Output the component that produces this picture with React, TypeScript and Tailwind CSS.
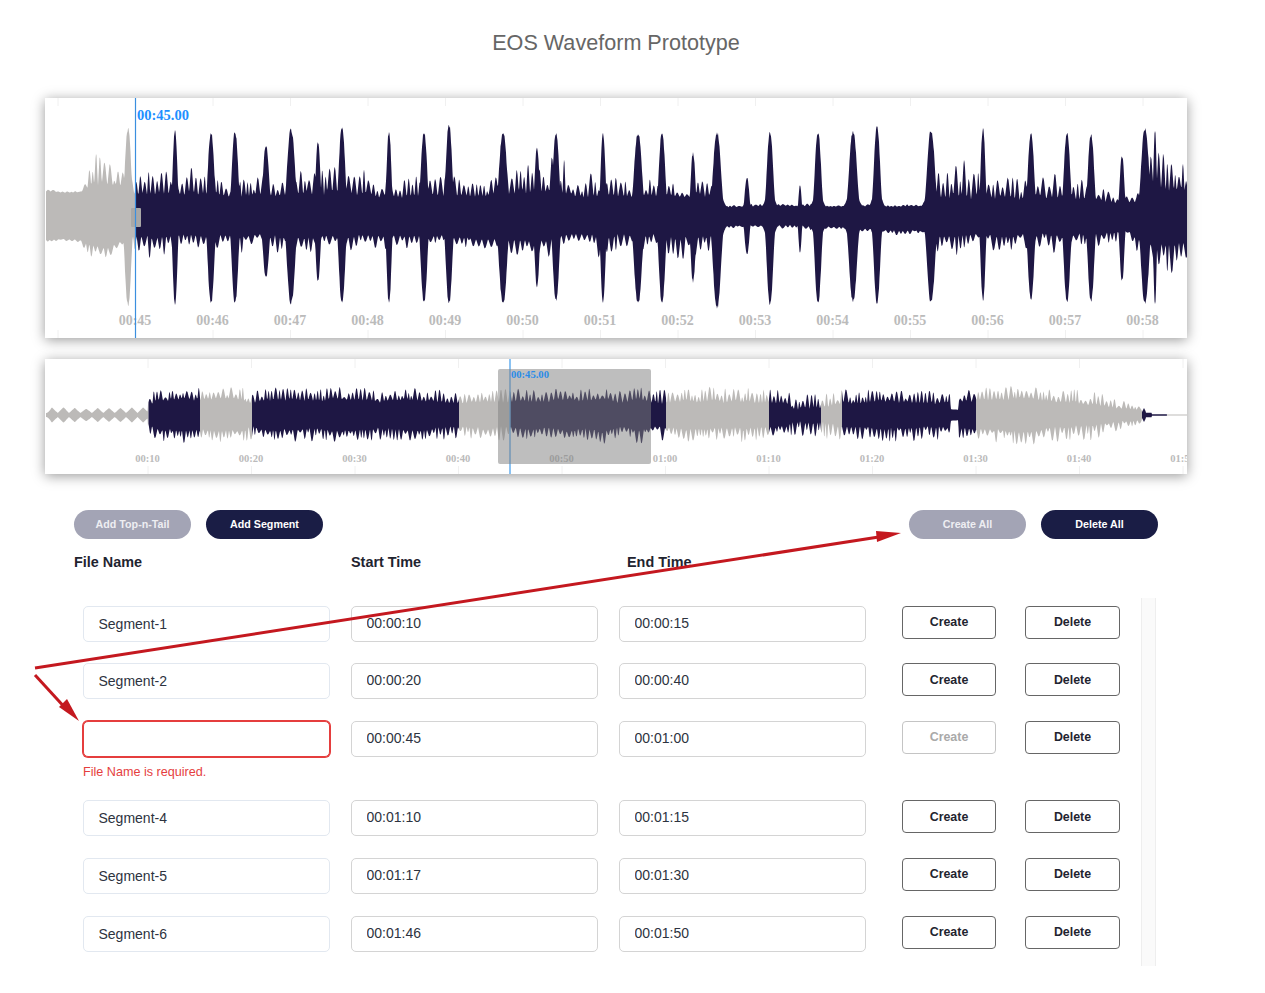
const NAVY = '#1e1744';
const GREY = '#bcbab8';

// [x, solid half height, spike half height]
type Key = [number, number, number];
// [x, height above centre, depth below centre, width]
type Peak = [number, number, number, number];

const mainTop: Key[] = [
  [46, 24, 27], [80, 24, 27], [86, 26, 44], [92, 28, 70], [110, 30, 62], [122, 28, 54], [135, 20, 48],
  [175, 20, 50], [265, 18, 46], [272, 20, 48], [290, 20, 60], [345, 20, 54], [385, 18, 50], [430, 18, 48],
  [470, 18, 38], [488, 18, 32], [492, 20, 56], [540, 22, 66], [590, 18, 50], [660, 18, 42], [688, 18, 26],
  [695, 20, 48], [715, 18, 46], [722, 9, 13], [790, 10, 14], [880, 9, 11], [925, 10, 13], [930, 16, 60],
  [990, 16, 56], [1040, 16, 48], [1100, 15, 40], [1122, 11, 16], [1140, 14, 36], [1150, 24, 64], [1187, 22, 64],
];

const mainBottom: Key[] = [
  [46, 24, 28], [80, 24, 28], [86, 28, 54], [110, 30, 44], [135, 18, 42], [260, 18, 38], [300, 20, 36],
  [425, 18, 36], [490, 22, 36], [530, 24, 50], [570, 18, 42], [660, 18, 38], [690, 20, 52], [715, 18, 36],
  [722, 10, 14], [790, 9, 14], [880, 13, 18], [925, 15, 20], [932, 18, 42], [1000, 18, 38], [1100, 16, 38],
  [1125, 13, 20], [1145, 26, 58], [1187, 24, 62],
];

const mainPeaks: Peak[] = [
  [128, 89, 91, 4], [175, 86, 89, 3], [211, 85, 89, 4], [235, 86, 89, 4], [266, 71, 62, 4], [291, 88, 89, 5],
  [318, 76, 67, 3], [342, 91, 89, 4], [389, 86, 89, 3], [424, 86, 89, 4], [449, 93, 89, 4], [503, 85, 89, 5],
  [537, 69, 72, 3], [556, 85, 87, 4], [603, 85, 89, 3], [638, 84, 89, 5], [662, 85, 89, 4], [693, 64, 67, 3],
  [717, 85, 94, 5], [747, 39, 39, 3], [770, 86, 91, 4], [800, 31, 37, 2], [818, 85, 89, 4], [853, 86, 87, 5],
  [877, 91, 89, 4], [931, 87, 88, 5], [983, 89, 86, 3], [1031, 84, 85, 4], [1067, 84, 87, 4], [1091, 83, 87, 4],
  [1122, 61, 66, 3], [1145, 89, 89, 5], [1155, 86, 89, 2],
];

const overviewKeys: Key[] = [
  [148, 6, 24], [156, 11, 26], [200, 13, 27], [252, 11, 27], [330, 13, 27], [459, 12, 27], [500, 10, 26],
  [560, 13, 27], [666, 11, 27], [770, 11, 27], [788, 10, 25], [792, 5, 22], [820, 5, 22], [825, 6, 26],
  [842, 11, 27], [950, 11, 27], [951, 6, 6], [958, 6, 6], [959, 13, 27], [976, 14, 28], [1050, 12, 28],
  [1090, 9, 27], [1120, 6, 16], [1140, 4, 8],
];

function makeRandom(seed: number) {
  return () => {
    seed = (seed + 0x6d2b79f5) | 0;
    let t = Math.imul(seed ^ (seed >>> 15), 1 | seed);
    t = (t + Math.imul(t ^ (t >>> 7), 61 | t)) ^ t;
    return ((t ^ (t >>> 14)) >>> 0) / 4294967296;
  };
}

function interpolate(keys: Key[], x: number): [number, number] {
  if (x <= keys[0][0]) return [keys[0][1], keys[0][2]];
  for (let i = 1; i < keys.length; i++) {
    if (x <= keys[i][0]) {
      const [x0, s0, p0] = keys[i - 1];
      const [x1, s1, p1] = keys[i];
      const f = (x - x0) / (x1 - x0);
      return [s0 + (s1 - s0) * f, p0 + (p1 - p0) * f];
    }
  }
  const last = keys[keys.length - 1];
  return [last[1], last[2]];
}

function lerpSeries(xs: number[], vs: number[]) {
  let j = 0;
  return (x: number) => {
    while (j < xs.length - 2 && xs[j + 1] < x) j++;
    const f = Math.min(1, (x - xs[j]) / (xs[j + 1] - xs[j]));
    return vs[j] + (vs[j + 1] - vs[j]) * f;
  };
}

// comb teeth: trough, flat-ish tip, trough, so the white slots stay visible
function comb(from: number, to: number, period: number, seed: number) {
  const rand = makeRandom(seed);
  const xs: number[] = [from];
  const vs: number[] = [0];
  let x = from;
  while (x < to) {
    const tip = 0.25 + 0.75 * Math.pow(rand(), 0.8);
    const span = period * (0.7 + rand() * 0.8);
    xs.push(x + span * 0.42, x + span * 0.62, x + span);
    vs.push(tip, tip * 0.92, rand() * 0.12);
    x += span;
  }
  return lerpSeries(xs, vs);
}

// slow wander used to vary the height of the teeth
function swell(from: number, to: number, minGap: number, maxGap: number, seed: number) {
  const rand = makeRandom(seed);
  const xs: number[] = [from];
  const vs: number[] = [rand()];
  while (xs[xs.length - 1] < to) {
    xs.push(xs[xs.length - 1] + minGap + rand() * (maxGap - minGap));
    vs.push(rand());
  }
  return lerpSeries(xs, vs);
}

type Column = { x: number; up: number; down: number };

function buildMain(): Column[] {
  const cols: Column[] = [];
  const combUp = comb(46, 1188, 4, 11);
  const combDown = comb(46, 1188, 4.4, 29);
  const swellUp = swell(46, 1188, 7, 16, 17);
  const swellDown = swell(46, 1188, 7, 16, 37);
  const jitter = makeRandom(7);
  for (let x = 46; x <= 1187; x += 0.5) {
    const [s1, p1] = interpolate(mainTop, x);
    const [s2, p2] = interpolate(mainBottom, x);
    const m1 = swellUp(x);
    const m2 = swellDown(x);
    let up = s1 * (0.95 + 0.1 * m1) + (p1 - s1) * combUp(x) * (0.6 + 0.5 * m1);
    let down = s2 * (0.95 + 0.1 * m2) + (p2 - s2) * combDown(x) * (0.6 + 0.5 * m2);
    for (const [px, h, d, w] of mainPeaks) {
      const dx = Math.abs(x - px);
      if (dx > 30) continue;
      const wob = 0.95 + jitter() * 0.05;
      const near = Math.exp(-Math.pow(dx / w, 2.4));
      const far = 0.5 * Math.exp(-dx / (w * 1.3));
      up = Math.max(up, h * Math.max(near, far) * wob);
      down = Math.max(down, d * Math.max(near, far) * wob);
    }
    cols.push({ x, up, down });
  }
  return cols;
}

function buildOverview(): Column[] {
  const cols: Column[] = [];
  const combUp = comb(46, 1188, 3.6, 41);
  const combDown = comb(46, 1188, 3.6, 53);
  const wander = swell(46, 1188, 10, 24, 61);
  for (let x = 46; x <= 1187; x += 0.5) {
    let up = 0;
    let down = 0;
    const m = wander(x);
    if (x < 148) {
      // the quiet lead-in is a row of small diamonds
      const phase = ((x - 52) % 11.4 + 11.4) % 11.4;
      const tri = Math.abs(phase - 5.7) / 5.7;
      up = down = 2 + 5.5 * tri * Math.min(1, (x - 45) / 6) * (0.75 + 0.35 * m);
    } else if (x < 1142) {
      const [s, p] = interpolate(overviewKeys, x);
      up = s * (0.85 + 0.4 * m) + (p - s) * combUp(x);
      down = s * (0.85 + 0.4 * m) + (p - s) * combDown(x);
    } else if (x < 1167) {
      const h = x < 1146 ? 7 - 2 * Math.abs(x - 1144) : x < 1152 ? 2.2 : 0.7;
      up = down = Math.max(h, 0.7);
    } else {
      up = down = 0.5;
    }
    cols.push({ x, up, down });
  }
  return cols;
}

function wavePath(cols: Column[], cy: number, from: number, to: number) {
  const part = cols.filter((c) => c.x >= from && c.x <= to);
  const top = part.map((c) => `${c.x} ${(cy - c.up).toFixed(1)}`);
  const bottom = part.reverse().map((c) => `${c.x} ${(cy + c.down).toFixed(1)}`);
  return `M${top.join('L')}L${bottom.join('L')}Z`;
}

const mainCols = buildMain();
const overviewCols = buildOverview();

const mainLabels = ['00:45', '00:46', '00:47', '00:48', '00:49', '00:50', '00:51', '00:52', '00:53', '00:54', '00:55', '00:56', '00:57', '00:58'];
const overviewLabels = ['00:10', '00:20', '00:30', '00:40', '00:50', '01:00', '01:10', '01:20', '01:30', '01:40', '01:50'];

const overviewRegions: [number, number, string][] = [
  [46, 148.5, GREY], [148.5, 200, NAVY], [200, 252, GREY], [252, 459, NAVY], [459, 510, GREY], [510, 666, NAVY],
  [666, 769, GREY], [769, 821, NAVY], [821, 842, GREY], [842, 976, NAVY], [976, 1142, GREY], [1142, 1167, NAVY], [1167, 1187, GREY],
];

function MainWave() {
  return (
    <svg viewBox="45 98 1142 240" className="block w-[1142px] h-[240px]">
      {Array.from({ length: 15 }, (_, i) => 58 + i * 77.5).map((x) => (
        <g key={x} stroke="#f0f0f0">
          <line x1={x} x2={x} y1={98} y2={106} />
          <line x1={x} x2={x} y1={330} y2={338} />
        </g>
      ))}
      <g className="blur-[0.35px]">
        <path d={wavePath(mainCols, 216, 46, 135.5)} fill={GREY} />
        <path d={wavePath(mainCols, 216, 135.5, 1187)} fill={NAVY} />
      </g>
      <rect x={131} y={208} width={10} height={19} rx={1} fill="#a9a8a7" />
      {mainLabels.map((t, i) => (
        <text
          key={t}
          x={135 + i * 77.5}
          y={325}
          textAnchor="middle"
          fill="#bbbbbb"
          className="font-['Liberation_Serif',serif] font-bold text-[14px]"
        >
          {t}
        </text>
      ))}
      <line x1={135.5} x2={135.5} y1={98} y2={338} stroke="#3b8fdf" strokeWidth={1.2} />
      <text x={137} y={120} fill="#1e90ff" className="font-['Liberation_Serif',serif] font-bold text-[14.5px]">
        00:45.00
      </text>
    </svg>
  );
}

function OverviewWave() {
  return (
    <svg viewBox="45 359 1142 115" className="block w-[1142px] h-[115px]">
      {overviewLabels.map((_, i) => (
        <g key={i} stroke="#f0f0f0">
          <line x1={148 + i * 103.5} x2={148 + i * 103.5} y1={359} y2={368} />
          <line x1={148 + i * 103.5} x2={148 + i * 103.5} y1={466} y2={474} />
        </g>
      ))}
      <g className="blur-[0.35px]">
        {overviewRegions.map(([a, b, fill]) => (
          <path key={a} d={wavePath(overviewCols, 415, a, b)} fill={fill} />
        ))}
      </g>
      {overviewLabels.map((t, i) => (
        <text
          key={t}
          x={147.5 + i * 103.5}
          y={462}
          textAnchor="middle"
          fill="#bbbbbb"
          className="font-['Liberation_Serif',serif] font-bold text-[10.6px]"
        >
          {t}
        </text>
      ))}
      <line x1={510} x2={510} y1={359} y2={474} stroke="#5aa9ee" strokeWidth={1.4} />
      <rect x={498} y={369} width={153} height={95} rx={2} fill="#7f7f7f" fillOpacity={0.51} />
      <text x={511} y={378} fill="#2a8ce8" className="font-['Liberation_Serif',serif] font-bold text-[10.6px]">
        00:45.00
      </text>
    </svg>
  );
}

function Pill({ label, muted }: { label: string; muted?: boolean }) {
  return (
    <button
      className={
        muted
          ? 'w-[117px] h-[29px] rounded-full bg-[#a3a4b5] text-[#eeeef2] text-[10.7px] font-bold'
          : 'w-[117px] h-[29px] rounded-full bg-[#1a1d45] text-white text-[10.7px] font-bold'
      }
    >
      {label}
    </button>
  );
}

function Field({ value, className }: { value: string; className: string }) {
  return (
    <input
      readOnly
      defaultValue={value}
      className={`w-[247px] h-[36px] bg-white pl-[14.5px] rounded-[5px] text-[14px] text-[#2d3340] outline-none ${className}`}
    />
  );
}

const rows = [
  { name: 'Segment-1', start: '00:00:10', end: '00:00:15', gap: 'mb-[21px]', btn: '' },
  { name: 'Segment-2', start: '00:00:20', end: '00:00:40', gap: 'mb-[22px]', btn: 'pt-[2px]' },
  { name: '', start: '00:00:45', end: '00:01:00', gap: 'mb-[43px]', btn: '', invalid: true },
  { name: 'Segment-4', start: '00:01:10', end: '00:01:15', gap: 'mb-[22px]', btn: 'pt-[2px]' },
  { name: 'Segment-5', start: '00:01:17', end: '00:01:30', gap: 'mb-[22px]', btn: '' },
  { name: 'Segment-6', start: '00:01:46', end: '00:01:50', gap: '', btn: '' },
];

function Row({ row }: { row: (typeof rows)[number] }) {
  const outline = 'border border-[#666666] text-[#1f2430]';
  const faded = 'border border-[#c4c4c4] text-[#a9a9a9]';
  const timeBox = 'border border-[#d4d4d4] pb-[2px]';
  return (
    <div className={`relative flex items-start ${row.gap}`}>
      <Field
        value={row.name}
        className={row.invalid ? 'border border-[#e53e3e] ring-1 ring-[#e53e3e]' : 'border border-[#e2e8f0]'}
      />
      <Field value={row.start} className={`ml-[21px] ${timeBox}`} />
      <Field value={row.end} className={`ml-[21px] ${timeBox}`} />
      <button className={`ml-[36px] w-[94px] h-[33px] rounded-[4px] text-[12.4px] font-bold ${row.btn} ${row.invalid ? faded : outline}`}>
        Create
      </button>
      <button className={`ml-[29px] w-[95px] h-[33px] rounded-[4px] text-[12.4px] font-bold ${row.btn} ${outline}`}>
        Delete
      </button>
      {row.invalid && (
        <p className="absolute left-0 top-[43px] text-[12.6px] leading-[16px] text-[#e53e3e]">File Name is required.</p>
      )}
    </div>
  );
}

function Arrows() {
  return (
    <svg className="absolute left-0 top-0 w-[1265px] h-[993px] pointer-events-none" viewBox="0 0 1265 993">
      <line x1={35} y1={668} x2={882} y2={536.5} stroke="#c4181f" strokeWidth={3} />
      <polygon points="901,533 876,531 877,542" fill="#c4181f" />
      <line x1={35} y1={675} x2={68} y2={711} stroke="#c4181f" strokeWidth={3} />
      <polygon points="79,721 59,707 67,699" fill="#c4181f" />
    </svg>
  );
}

export default function App() {
  return (
    <div className="relative min-h-[993px] bg-white font-['Liberation_Sans',Arial,sans-serif] overflow-hidden">
      <h1 className="w-[1232px] pt-[30px] mb-[42px] text-center text-[21.6px] leading-[26px] font-normal text-[#666666]">
        EOS Waveform Prototype
      </h1>

      <section className="ml-[45px] w-[1142px] bg-white shadow-[0_2px_12px_rgba(0,0,0,0.4)]">
        <MainWave />
      </section>
      <section className="ml-[45px] mt-[21px] w-[1142px] bg-white shadow-[0_2px_12px_rgba(0,0,0,0.4)]">
        <OverviewWave />
      </section>

      <div className="ml-[74px] mt-[36px] w-[1084px] flex justify-between">
        <div className="flex gap-[15px]">
          <Pill label="Add Top-n-Tail" muted />
          <Pill label="Add Segment" />
        </div>
        <div className="flex gap-[15px]">
          <Pill label="Create All" muted />
          <Pill label="Delete All" />
        </div>
      </div>

      <div className="ml-[74px] mt-[13px] flex text-[14.4px] leading-[20px] font-bold text-[#1f2430]">
        <div className="w-[277px]">File Name</div>
        <div className="w-[276px]">Start Time</div>
        <div>End Time</div>
      </div>

      <div className="ml-[83px] mt-[26px] flex h-[368px]">
        <div className="w-[1037px] pt-[8px]">
          {rows.map((row) => (
            <Row key={row.start} row={row} />
          ))}
        </div>
        <div className="ml-[21px] w-[15px] bg-[#fafafa] border-x border-[#eeeeee]" />
      </div>

      <Arrows />
    </div>
  );
}
